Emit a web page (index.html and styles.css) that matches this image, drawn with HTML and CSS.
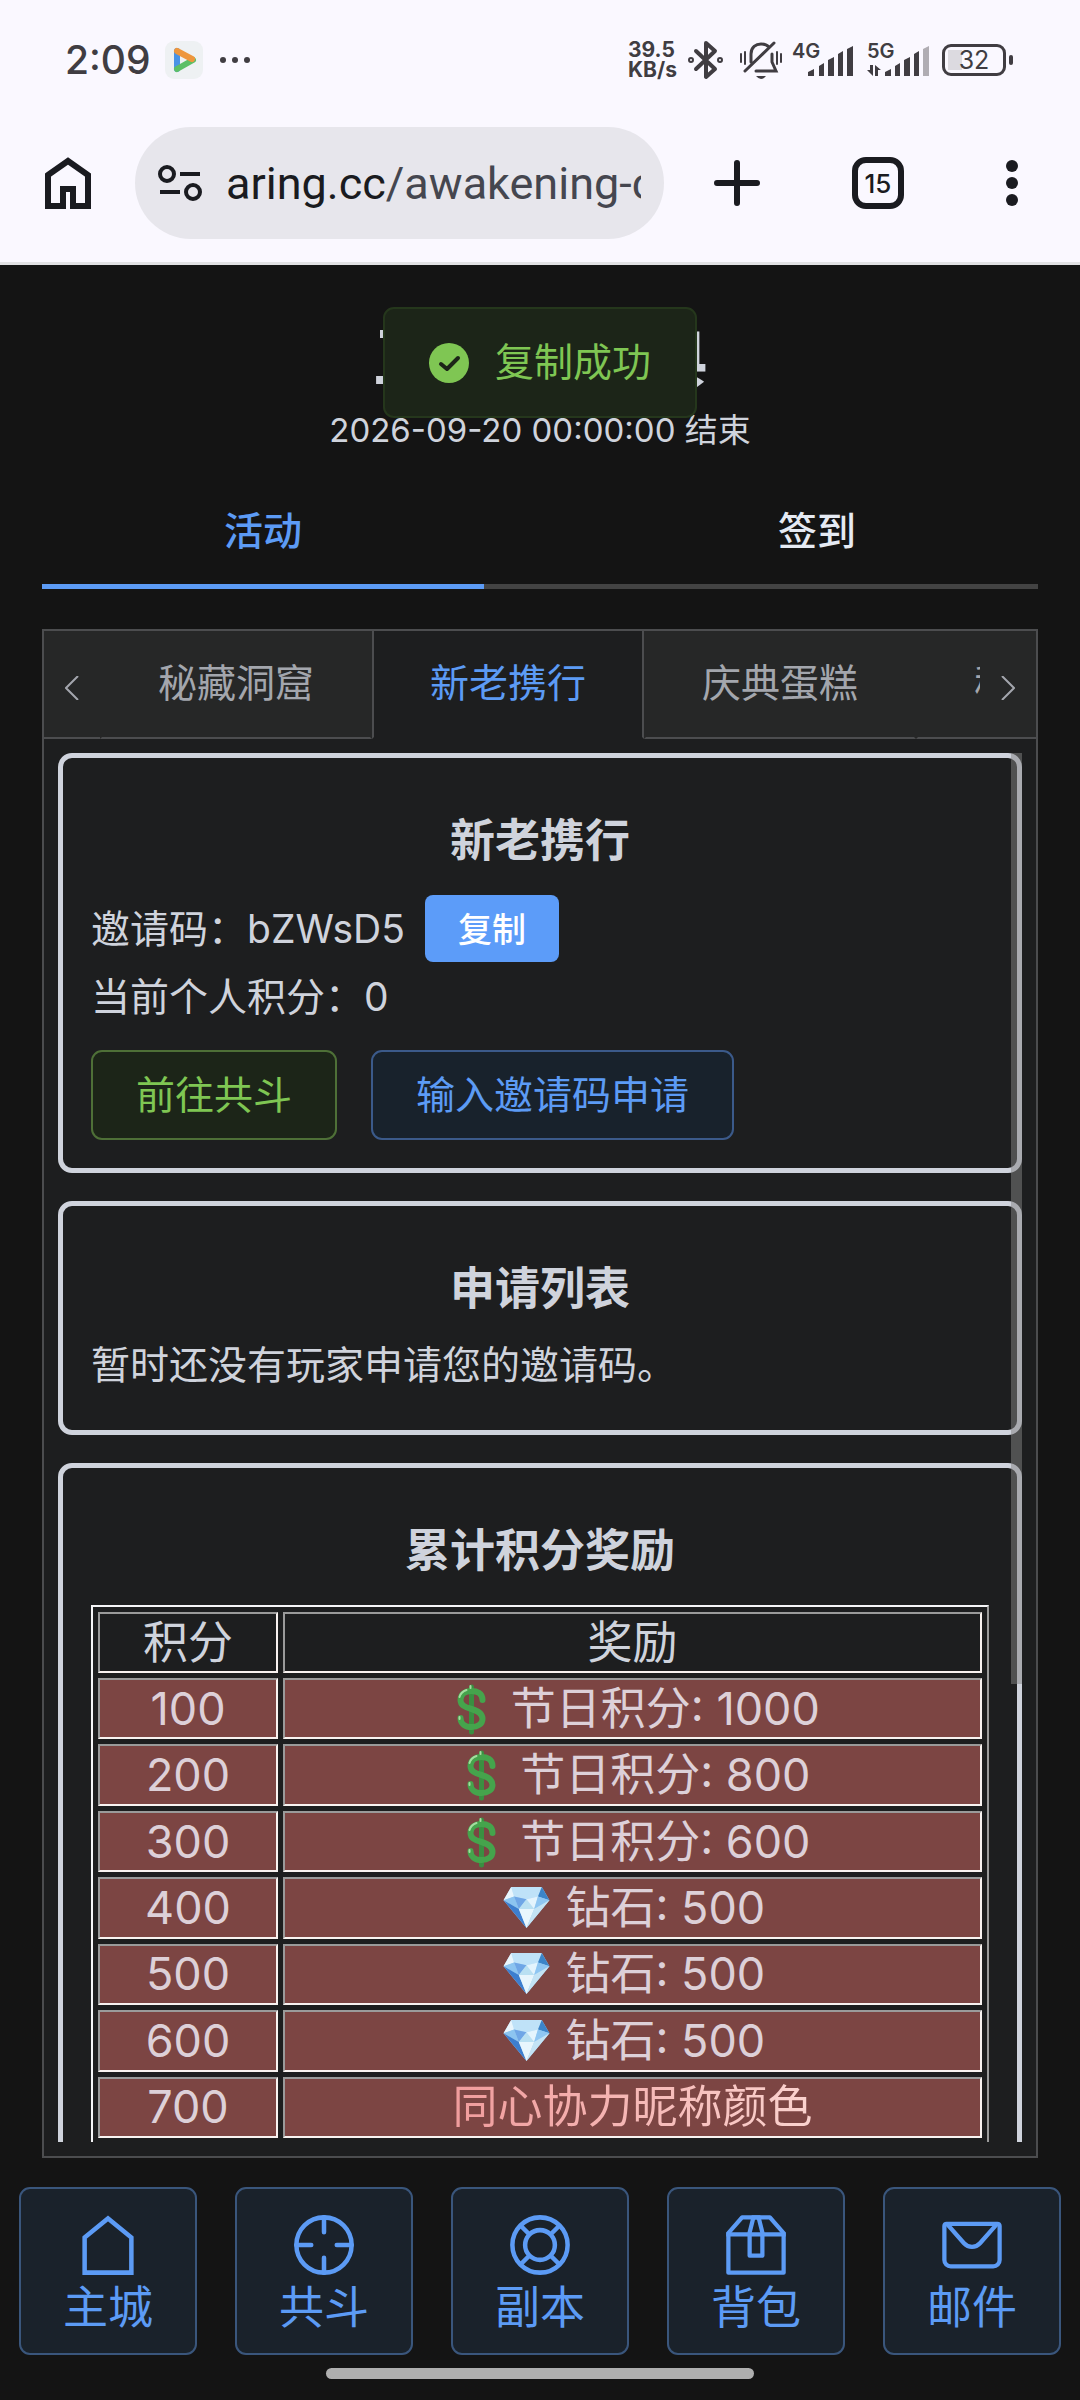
FILE: index.html
```html
<!DOCTYPE html>
<html lang="zh-CN">
<head>
<meta charset="utf-8">
<meta name="viewport" content="width=device-width, initial-scale=1">
<title>五周年庆典</title>
<link rel="stylesheet" href="styles.css">
</head>
<body>
<svg class="defs" aria-hidden="true">
  <symbol id="dollar" viewBox="0 0 52 52">
    <path d="M26 4V49" stroke="#3a8f41" stroke-width="5" stroke-linecap="round" fill="none"/>
    <path d="M37 17C37 10 31 8 26 8C19 8 15 12 15 17C15 22 19 24 26 26C33 28 37 31 37 36C37 41 32 44 26 44C20 44 15 41 15 35" stroke="#45a44c" stroke-width="6" stroke-linecap="round" fill="none"/>
    <path d="M14 14C15 10 18 8 21 7M14 34L14 36M25 3L25 5" stroke="#a5dca0" stroke-width="2" stroke-linecap="round" fill="none"/>
  </symbol>
  <symbol id="gem" viewBox="0 0 50 46">
    <path d="M9 2H41L49 16L25 45L1 16Z" fill="#a9d4f3"/>
    <path d="M9 2H41L37 12L25 15L12 12Z" fill="#bfe2f8"/>
    <path d="M9 2L12 12L1 16Z" fill="#e9f5fc"/>
    <path d="M41 2L49 16L37 12Z" fill="#3c84c8"/>
    <path d="M1 16L12 12L17 25Z" fill="#8cc4f0"/>
    <path d="M12 12L25 15L17 25Z" fill="#6fa6e6"/>
    <path d="M25 15L17 25H33Z" fill="#b9e0f2"/>
    <path d="M25 15L37 12L33 25Z" fill="#e4f4fd"/>
    <path d="M37 12L49 16L33 25Z" fill="#8fc6f2"/>
    <path d="M1 16L17 25L25 45Z" fill="#3d7ecf"/>
    <path d="M17 25H33L25 45Z" fill="#e8f6fd"/>
    <path d="M33 25L49 16L25 45Z" fill="#c3e3f5"/>
  </symbol>
</svg>

<div class="app">
  <header class="browser">
    <div class="status">
      <div class="status-left">
        <time class="clock">2:09</time>
        <svg class="app-badge" viewBox="0 0 38 38" aria-hidden="true">
          <rect width="38" height="38" rx="9" fill="#eef1f3"/>
          <path d="M12 10V28" stroke="#4a93e6" stroke-width="6" stroke-linecap="round"/>
          <path d="M12 28L28 19" stroke="#5cbf66" stroke-width="6" stroke-linecap="round"/>
          <path d="M12 10L27 18" stroke="#ee963d" stroke-width="6" stroke-linecap="round"/>
        </svg>
        <svg class="more-dots" viewBox="0 0 32 8" aria-hidden="true"><g fill="#403d42"><circle cx="4" cy="4" r="3"/><circle cx="16" cy="4" r="3"/><circle cx="28" cy="4" r="3"/></g></svg>
      </div>
      <div class="status-right">
        <div class="speed"><span>39.5</span><span>KB/s</span></div>
        <svg class="bt" viewBox="0 0 36 40" fill="none" stroke="#403d42" stroke-width="4" stroke-linecap="round" stroke-linejoin="round" aria-hidden="true"><path d="M8 11L27 29L18 37V3L27 11L8 29"/><circle cx="3" cy="20" r="1"/><circle cx="32" cy="20" r="1"/></svg>
        <svg class="bell" viewBox="0 0 44 40" fill="none" stroke="#403d42" stroke-width="3" stroke-linecap="round" aria-hidden="true"><path d="M12 22V14C12 7 17 4 22 4C25 4 28 5 30 7M33 14V22L37 31H17M6 31L35 3" /><path d="M2 14V22M6 12V24M38 12V24M42 14V22" stroke-width="2"/><path d="M17 36H27Q22 42 17 36Z" fill="#403d42" stroke="none"/></svg>
        <svg class="signal" viewBox="0 0 62 34" aria-hidden="true"><g fill="#403d42"><path d="M16 33V29L22 26V33ZM27 33V23L32 20V33ZM36 33V17L42 14V33ZM46 33V11L51 8V33ZM55 33V6L61 3V33Z"/></g><text x="0" y="15" class="net">4G</text></svg>
        <svg class="signal" viewBox="0 0 62 34" aria-hidden="true"><g fill="#403d42"><path d="M18 33V29L24 26V33ZM28 33V23L33 20V33ZM37 33V17L43 14V33ZM47 33V11L52 8V33Z"/><path d="M56 33V6L62 3V33Z" opacity=".4"/><path d="M3 22H6V33L0 27H3ZM8 33V22L14 27H11V33Z"/></g><text x="0" y="15" class="net">5G</text></svg>
        <div class="battery"><span>32</span></div>
      </div>
    </div>
    <div class="toolbar">
      <button class="tool home" aria-label="主页"><svg viewBox="0 0 46 52" fill="none" stroke="#1a1b20" stroke-width="6"><path d="M3 18L23 4L43 18V49H28V32H18V49H3Z"/></svg></button>
      <button class="url">
        <svg viewBox="0 0 44 38" fill="none" stroke="#1a1b20" stroke-width="4" aria-hidden="true"><circle cx="9" cy="10" r="7"/><path d="M22 10H42M2 28H22"/><circle cx="35" cy="28" r="7"/></svg>
        <span class="url-text">aring.cc<span>/awakening-c</span></span>
      </button>
      <button class="tool plus" aria-label="新标签页"><svg viewBox="0 0 46 46" stroke="#1a1b20" stroke-width="6" stroke-linecap="round"><path d="M23 3V43M3 23H43"/></svg></button>
      <button class="tabs-count" aria-label="标签页">15</button>
      <button class="tool menu" aria-label="菜单"><svg viewBox="0 0 12 46" fill="#1a1b20"><circle cx="6" cy="6" r="6"/><circle cx="6" cy="23" r="6"/><circle cx="6" cy="40" r="6"/></svg></button>
    </div>
  </header>

  <div class="toast" role="status">
    <svg viewBox="0 0 40 40" aria-hidden="true"><circle cx="20" cy="20" r="20" fill="#7fc653"/><path d="M12 21L18 26L29 15" fill="none" stroke="#1c2518" stroke-width="4" stroke-linecap="round" stroke-linejoin="round"/></svg>
    <span>复制成功</span>
  </div>

  <main class="page">
    <h1>五周年庆典</h1>
    <p class="ends">2026-09-20 00:00:00 结束</p>

    <nav class="sections">
      <button class="section active">活动</button>
      <button class="section">签到</button>
    </nav>

    <section class="panel">
      <div class="panel-head">
        <button class="arrow" aria-label="向左"><svg viewBox="0 0 14 24"><path d="M13 0L1 12L13 24"/></svg></button>
        <div class="tab-strip">
          <button class="tab">秘藏洞窟</button>
          <button class="tab active">新老携行</button>
          <button class="tab">庆典蛋糕</button>
          <button class="tab">秘</button>
        </div>
        <button class="arrow" aria-label="向右"><svg viewBox="0 0 14 24"><path d="M1 0L13 12L1 24"/></svg></button>
      </div>

      <div class="panel-body">
        <div class="cards">
          <article class="card">
            <h2>新老携行</h2>
            <div class="code-row"><span class="code">邀请码：bZWsD5</span><button class="copy">复制</button></div>
            <p class="points">当前个人积分：0</p>
            <div class="actions">
              <button class="btn green">前往共斗</button>
              <button class="btn blue">输入邀请码申请</button>
            </div>
          </article>

          <article class="card">
            <h2>申请列表</h2>
            <p class="empty">暂时还没有玩家申请您的邀请码。</p>
          </article>

          <article class="card">
            <h2>累计积分奖励</h2>
            <table class="rewards">
              <thead><tr><th class="score">积分</th><th>奖励</th></tr></thead>
              <tbody>
                <tr><td>100</td><td><svg class="emoji" role="img" aria-label="美元"><use href="#dollar"/></svg> 节日积分: 1000</td></tr>
                <tr><td>200</td><td><svg class="emoji" role="img" aria-label="美元"><use href="#dollar"/></svg> 节日积分: 800</td></tr>
                <tr><td>300</td><td><svg class="emoji" role="img" aria-label="美元"><use href="#dollar"/></svg> 节日积分: 600</td></tr>
                <tr><td>400</td><td><svg class="emoji gem" role="img" aria-label="宝石"><use href="#gem"/></svg> 钻石: 500</td></tr>
                <tr><td>500</td><td><svg class="emoji gem" role="img" aria-label="宝石"><use href="#gem"/></svg> 钻石: 500</td></tr>
                <tr><td>600</td><td><svg class="emoji gem" role="img" aria-label="宝石"><use href="#gem"/></svg> 钻石: 500</td></tr>
                <tr><td>700</td><td><span class="name-color">同心协力昵称颜色</span></td></tr>
              </tbody>
            </table>
          </article>
        </div>
        <div class="scroll-thumb"></div>
      </div>
    </section>
  </main>

  <nav class="dock">
    <button><svg viewBox="0 0 1024 1024" fill="none" stroke="currentColor" stroke-width="68"><path d="M160 399L512 112L864 399V928H160Z"/></svg><span>主城</span></button>
    <button><svg viewBox="0 0 1024 1024" fill="none" stroke="currentColor" stroke-width="68" stroke-linecap="round"><circle cx="512" cy="512" r="416"/><path d="M512 96V320M512 704V928M96 512H320M704 512H928"/></svg><span>共斗</span></button>
    <button><svg viewBox="0 0 1024 1024" fill="none" stroke="currentColor" stroke-width="68"><circle cx="512" cy="512" r="416"/><circle cx="512" cy="512" r="224"/><path d="M218 218L354 354M806 218L670 354M218 806L354 670M806 806L670 670"/></svg><span>副本</span></button>
    <button><svg viewBox="0 0 1024 1024" fill="currentColor" fill-rule="evenodd"><path d="M317 128L128 344V896H896V344L707 128ZM303 64H721Q735 64 745 75L952 311Q960 320 960 332V928Q960 960 928 960H96Q64 960 64 928V332Q64 320 72 311L278 75Q288 64 303 64Z"/><path d="M64 320H960V384H64Z"/><path d="M448 328V640H576V328L526 128H498ZM448 64H576L640 320V672Q640 704 608 704H416Q384 704 384 672V320Z"/></svg><span>背包</span></button>
    <button><svg viewBox="0 0 1024 1024" fill="currentColor" fill-rule="evenodd"><path d="M128 224v512a64 64 0 0 0 64 64h640a64 64 0 0 0 64-64V224H128zm0-64h768a64 64 0 0 1 64 64v512a128 128 0 0 1-128 128H192A128 128 0 0 1 64 736V224a64 64 0 0 1 64-64z"/><path d="M904 224 656.512 506.88a192 192 0 0 1-289.024 0L120 224h784zm-698.944 0 210.56 240.704a128 128 0 0 0 192.704 0L818.944 224H205.056z"/></svg><span>邮件</span></button>
  </nav>
  <div class="gesture"></div>
</div>
</body>
</html>
```
FILE: styles.css
```css
:root {
  --bg: #141414;
  --panel: #1d1e1f;
  --head: #262727;
  --line: #4c4d4f;
  --text: #cfd3dc;
  --blue: #5c9bf5;
  --green: #7fc653;
  --ink: #1a1b20;
  --status: #403d42;
}

* { box-sizing: border-box; }

body {
  margin: 0;
  background: var(--bg);
  color: var(--text);
  font-family: Inter, "Noto Sans CJK SC", sans-serif;
  font-size: 39px;
}

h1, h2, p { margin: 0; }

button {
  margin: 0;
  padding: 0;
  border: 0;
  background: none;
  color: inherit;
  font: inherit;
}

svg { display: block; flex: none; }

.defs { position: absolute; width: 0; height: 0; }

.app {
  position: relative;
  display: flex;
  flex-direction: column;
  height: 100vh;
}

/* browser chrome */
.browser {
  background: #faf8ff;
  border-bottom: 3px solid #e1e1e4;
  color: var(--ink);
}

.status {
  display: flex;
  justify-content: space-between;
  align-items: center;
  height: 119px;
  padding: 0 68px 0 65px;
  color: var(--status);
}

.status-left, .status-right { display: flex; align-items: center; }
.clock { width: 84px; font-size: 39px; font-weight: 500; }
.app-badge { width: 38px; height: 38px; margin: 0 16px; }
.more-dots { width: 32px; height: 8px; }

.speed {
  display: flex;
  flex-direction: column;
  width: 60px;
  font-size: 21px;
  font-weight: 700;
  line-height: 20px;
}

.bt { width: 36px; height: 40px; }
.bell { width: 44px; height: 40px; margin: 0 9px 0 15px; }
.signal { width: 62px; height: 34px; margin-right: 13px; overflow: visible; }
.net { font-size: 20px; font-weight: 600; fill: var(--status); }

.battery {
  position: relative;
  width: 64px;
  height: 32px;
  margin-right: 6px;
  border: 3px solid var(--status);
  border-radius: 9px;
  background: linear-gradient(#dcdae0, #dcdae0) 3px 3px / 14px 20px no-repeat;
  font-size: 25px;
  line-height: 26px;
  text-align: center;
}

.battery::after {
  content: "";
  position: absolute;
  right: -10px;
  top: 8px;
  width: 4px;
  height: 10px;
  border-radius: 2px;
  background: var(--status);
}

.toolbar {
  display: flex;
  align-items: center;
  height: 143px;
  padding: 8px 62px 23px 45px;
}

.home svg { width: 46px; height: 52px; }

.url {
  display: flex;
  flex: 1;
  align-items: center;
  gap: 24px;
  min-width: 0;
  height: 112px;
  margin: 0 50px 0 44px;
  padding: 0 23px;
  border-radius: 56px;
  background: #e7e6ec;
  font-size: 45px;
  font-family: Roboto, "Noto Sans CJK SC", sans-serif;
}

.url svg { width: 44px; height: 38px; }
.url-text { overflow: hidden; white-space: nowrap; }
.url-text span { color: #45464f; }
.plus svg { width: 46px; height: 46px; }

.tabs-count {
  width: 52px;
  height: 52px;
  margin: 0 102px 0 92px;
  border: 6px solid var(--ink);
  border-radius: 14px;
  font-size: 26px;
  font-weight: 500;
}

.menu svg { width: 12px; height: 46px; }

/* toast over the page title */
.toast {
  position: absolute;
  z-index: 2;
  top: 307px;
  left: 50%;
  transform: translateX(-50%);
  display: flex;
  align-items: center;
  gap: 26px;
  height: 111px;
  padding: 0 44px;
  border: 2px solid #25371c;
  border-radius: 11px;
  background: #1c2518;
  color: var(--green);
  white-space: nowrap;
}

.toast svg { width: 40px; height: 40px; }
.toast span { padding-bottom: 8px; }

/* page */
.page {
  display: flex;
  flex: 1;
  flex-direction: column;
  min-height: 0;
  padding: 44px 42px 0;
}

h1 {
  margin-bottom: 2px;
  font-size: 67px;
  line-height: 96px;
  text-align: center;
}

.ends {
  font-size: 33px;
  line-height: 46px;
  text-align: center;
}

.sections {
  display: grid;
  grid-template-columns: 1fr 1fr;
  column-gap: 112px;
  margin: 40px 0;
  background: linear-gradient(#434343, #434343) bottom / 100% 5px no-repeat;
}

.section {
  padding-bottom: 15px;
  border-bottom: 5px solid transparent;
  color: #e5eaf3;
  font-weight: 500;
  line-height: 76px;
}

.section.active { border-color: var(--blue); color: var(--blue); }

.panel {
  display: flex;
  flex: 1;
  flex-direction: column;
  min-height: 0;
  border: 2px solid var(--line);
  background: var(--panel);
}

.panel-head { display: flex; height: 108px; }

.arrow {
  display: flex;
  flex: none;
  justify-content: center;
  width: 56px;
  padding-top: 45px;
  border-bottom: 2px solid var(--line);
  background: var(--head);
}

.arrow svg {
  width: 14px;
  height: 24px;
  fill: none;
  stroke: #a3a6ad;
  stroke-width: 2;
}

.tab-strip { display: flex; flex: 1; min-width: 0; overflow: hidden; }

.tab {
  flex: none;
  padding: 0 56px 8px;
  border: solid var(--head);
  border-width: 0 2px 2px;
  border-bottom-color: var(--line);
  background: var(--head);
  color: #a3a6ad;
}

.tab.active {
  border-color: var(--line);
  border-bottom-color: var(--panel);
  background: var(--panel);
  color: var(--blue);
}

.panel-body {
  position: relative;
  flex: 1;
  min-height: 0;
  margin: 14px;
}

.cards {
  display: flex;
  flex-direction: column;
  gap: 28px;
  height: 100%;
  overflow: hidden;
}

.scroll-thumb {
  position: absolute;
  top: 0;
  right: 0;
  width: 11px;
  height: 67%;
  background: rgba(131, 131, 131, .5);
}

.card {
  flex: none;
  padding: 28px;
  border: 5px solid var(--text);
  border-radius: 14px;
}

h2 {
  margin: 23px 0 22px;
  font-size: 45px;
  line-height: 64px;
  text-align: center;
}

.code-row { display: flex; align-items: center; gap: 20px; }
.code { padding-bottom: 6px; }

.copy {
  width: 134px;
  height: 67px;
  padding-bottom: 3px;
  border-radius: 8px;
  background: #5c9cf9;
  color: #fff;
  font-size: 34px;
  font-weight: 500;
}

.points { margin-bottom: 18px; line-height: 70px; }
.actions { display: flex; gap: 34px; }

.btn {
  height: 90px;
  padding: 0 43px 7px;
  border: 2px solid;
  border-radius: 11px;
}

.green { border-color: #4e7037; background: #1c2518; color: var(--green); }
.blue { border-color: #3b5a8a; background: #18222c; color: var(--blue); }

.empty { margin-top: -8px; line-height: 60px; padding-bottom: 7px; }

/* reward table */
.rewards {
  width: 100%;
  height: 540px;
  border: 2px solid;
  border-color: #f5f5f7 #9a9a9a #9a9a9a #f5f5f7;
  border-spacing: 5px;
  font-size: 45px;
  line-height: 54px;
  text-align: center;
}

.score { width: 180px; }

.rewards th, .rewards td {
  height: 61px;
  padding: 0;
  border: 2px solid;
  border-color: #9a9a9a #f8f2f0 #f8f2f0 #9a9a9a;
  font-weight: 400;
}

.rewards td { background: #7c4543; color: #ddd0d8; }

.emoji {
  display: inline-block;
  width: 53px;
  height: 52px;
  margin: -6px 0;
  vertical-align: -4px;
}

.emoji.gem { height: 44px; vertical-align: 1px; }

.name-color {
  background: linear-gradient(90deg, #f09c9c, #fbd3cf);
  background-clip: text;
  -webkit-background-clip: text;
  color: transparent;
}

/* bottom dock */
.dock {
  display: grid;
  grid-template-columns: repeat(5, 1fr);
  gap: 38px;
  padding: 29px 19px 13px;
}

.dock button {
  display: flex;
  flex-direction: column;
  align-items: center;
  height: 168px;
  padding-top: 22px;
  border: 2px solid #3a567c;
  border-radius: 11px;
  background: #1a222b;
  color: var(--blue);
  font-size: 45px;
  line-height: 58px;
}

.dock svg { width: 68px; height: 68px; }

.gesture {
  width: 428px;
  height: 11px;
  margin: 0 auto 21px;
  border-radius: 6px;
  background: #afafaf;
}
```
